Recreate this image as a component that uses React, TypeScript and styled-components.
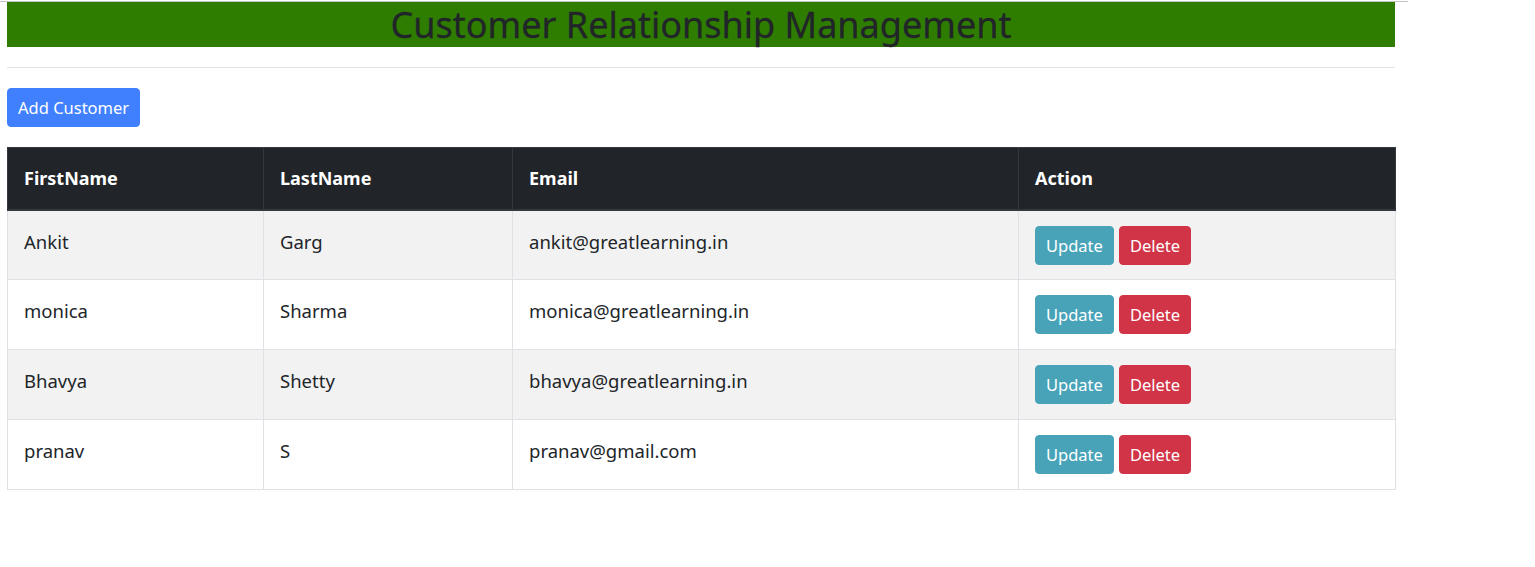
import React from "react";
import styled, { createGlobalStyle } from "styled-components";

const Global = createGlobalStyle`
  html, body { margin: 0; padding: 0; background: #fff; }
  body { font-family: "Noto Sans", "Open Sans", sans-serif; color: #212529; }
`;

const TopRule = styled.div`
  margin-top: 1px;
  width: 1408px;
  height: 1px;
  background: #c4c4c4;
`;

const Container = styled.div`
  width: 1388px;
  padding-left: 7px;
`;

const Banner = styled.div`
  height: 45px;
  background: #2e7d00;
  display: flex;
  justify-content: center;
`;

const Title = styled.h1`
  margin: 0;
  font-size: 36px;
  font-weight: 400;
  line-height: 45px;
  color: #212529;
  white-space: nowrap;
  -webkit-text-stroke: 0.3px #212529;
`;

const Rule = styled.hr`
  margin: 20px 0;
  border: 0;
  border-top: 1px solid #e2e2e2;
`;

const Button = styled.button<{ $bg: string }>`
  display: inline-flex;
  align-items: center;
  justify-content: center;
  height: 39px;
  padding: 0 10px;
  border: 1px solid ${(p) => p.$bg};
  border-radius: 4px;
  background: ${(p) => p.$bg};
  color: #fff;
  font-family: inherit;
  font-size: 16.5px;
  cursor: pointer;
`;

const Table = styled.table`
  margin-top: 20px;
  width: 1388px;
  border-collapse: collapse;
  table-layout: fixed;
  font-size: 18.5px;
`;

const Th = styled.th`
  background: #212529;
  color: #fff;
  font-weight: 700;
  font-size: 18px;
  text-align: left;
  height: 62px;
  padding: 0 16px;
  border: 1px solid #32383e;
  border-bottom: 2px solid #32383e;
  box-sizing: border-box;
`;

const Tr = styled.tr<{ $striped: boolean }>`
  background: ${(p) => (p.$striped ? "#f2f2f2" : "#fff")};
`;

const Td = styled.td`
  height: 70px;
  box-sizing: border-box;
  padding: 17px 16px 0;
  vertical-align: top;
  border: 1px solid #dee2e6;
  line-height: 28px;
`;

const ActionTd = styled(Td)`
  padding-top: 15px;
`;

const Actions = styled.div`
  display: flex;
  gap: 5px;
`;

const rows = [
  ["Ankit", "Garg", "ankit@greatlearning.in"],
  ["monica", "Sharma", "monica@greatlearning.in"],
  ["Bhavya", "Shetty", "bhavya@greatlearning.in"],
  ["pranav", "S", "pranav@gmail.com"],
];

export default function App() {
  return (
    <>
      <Global />
      <TopRule />
      <Container>
        <Banner>
          <Title>Customer Relationship Management</Title>
        </Banner>
        <Rule />
        <Button $bg="#4080ff">Add Customer</Button>
        <Table>
          <colgroup>
            <col style={{ width: 256 }} />
            <col style={{ width: 249 }} />
            <col style={{ width: 506 }} />
            <col style={{ width: 377 }} />
          </colgroup>
          <thead>
            <tr>
              <Th>FirstName</Th>
              <Th>LastName</Th>
              <Th>Email</Th>
              <Th>Action</Th>
            </tr>
          </thead>
          <tbody>
            {rows.map((r, i) => (
              <Tr key={i} $striped={i % 2 === 0}>
                <Td>{r[0]}</Td>
                <Td>{r[1]}</Td>
                <Td>{r[2]}</Td>
                <ActionTd>
                  <Actions>
                    <Button $bg="#48a3b9">Update</Button>
                    <Button $bg="#d13446">Delete</Button>
                  </Actions>
                </ActionTd>
              </Tr>
            ))}
          </tbody>
        </Table>
      </Container>
    </>
  );
}
